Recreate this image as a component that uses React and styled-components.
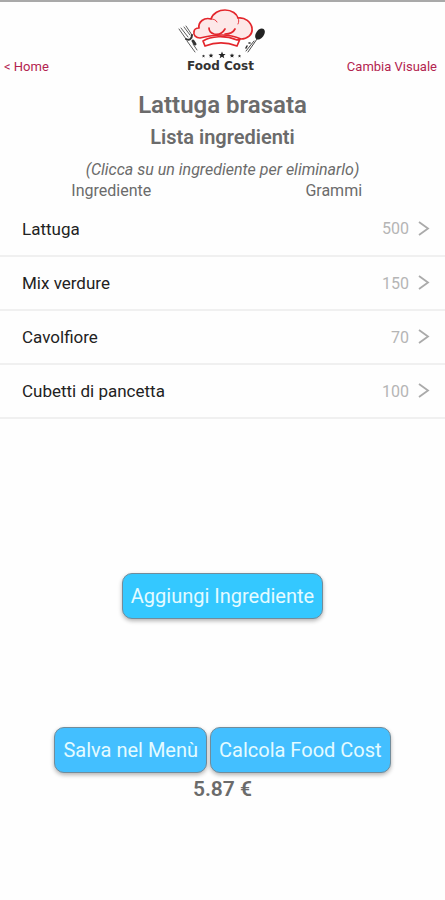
import React, { useState } from "react";
import styled, { createGlobalStyle } from "styled-components";

const Global = createGlobalStyle`
  * { box-sizing: border-box; }
  body {
    margin: 0;
    background: #fefefe;
    color: #6b6b6b;
    font-family: Roboto, "Liberation Sans", sans-serif;
  }
`;

const Page = styled.main`
  min-height: 100vh;
  border-top: 2px solid #a9a9a9;
`;

const Header = styled.header`
  display: grid;
  grid-template-columns: 1fr auto 1fr;
  align-items: end;
  height: 75px;
  padding: 0 8px 0 4px;
`;

const NavLink = styled.a`
  justify-self: ${(p) => (p.$right ? "end" : "start")};
  color: #b3234f;
  font-size: 13px;
  line-height: 20px;
  text-decoration: none;
`;

const Brand = styled.div`
  display: flex;
  flex-direction: column;
  align-items: center;
  height: 75px;
  padding-top: 6px;
`;

const BrandName = styled.span`
  color: #333;
  font-family: "DejaVu Sans", sans-serif;
  font-size: 12px;
  font-weight: bold;
  line-height: 12px;
`;

const Title = styled.h1`
  margin: 14px 0 0;
  font-size: 24px;
  font-weight: 600;
  line-height: 28px;
  text-align: center;
`;

const Subtitle = styled.h2`
  margin: 4px 0 0;
  font-size: 20px;
  font-weight: 600;
  line-height: 28px;
  text-align: center;
`;

const Hint = styled.p`
  margin: 9px 0 0;
  font-size: 16px;
  font-style: italic;
  line-height: 20px;
  text-align: center;
`;

const Table = styled.table`
  width: 100%;
  table-layout: fixed;
  border-collapse: collapse;
`;

const Head = styled.th`
  height: 22px;
  padding: 0;
  font-size: 16px;
  font-weight: 400;
  line-height: 22px;
`;

const Cell = styled.td`
  height: 54px;
  padding: 0 14px 0 22px;
  border-bottom: 2px solid #f0f0f0;
  color: #222;
  font-size: 17px;
`;

const Amount = styled.button`
  display: flex;
  align-items: center;
  gap: 8px;
  margin-left: auto;
  padding: 0;
  border: 0;
  background: none;
  color: #b5b5b5;
  font-family: inherit;
  font-size: 16px;
  cursor: pointer;
`;

const Actions = styled.div`
  display: flex;
  justify-content: center;
  gap: 3px;
  margin-top: ${(p) => p.$top}px;
`;

const Button = styled.button`
  height: 46px;
  padding: 0 8px;
  border: 1px solid #718c9b;
  border-radius: 10px;
  background: ${(p) => p.$color || "#43bfff"};
  box-shadow: 0 2px 4px rgba(0, 0, 0, 0.3);
  color: #e4fbff;
  font-family: inherit;
  font-size: 20px;
  line-height: 24px;
  cursor: pointer;
`;

const Total = styled.p`
  margin: 2px 0 0;
  font-size: 21px;
  font-weight: 600;
  line-height: 28px;
  text-align: center;
`;

const star = "M0-3.6 1-1.1 3.6-1 1.6.7 2.3 3.2 0 1.8-2.3 3.2-1.6.7-3.6-1-1-1.1Z";

function Logo() {
  return (
    <svg width="90" height="52" viewBox="176 8 90 52" aria-hidden="true">
      <g stroke="#e3262c" strokeWidth="1.7" strokeLinecap="round" strokeLinejoin="round">
        <path fill="#fde8e8" d="M200 38c-4 0-7-3-6-6 0-2 2-4 5-4-1-6 5-11 12-9 2-6 8-9 14-9 7 0 12 4 13 8 7-1 13 4 14 10 1 7-5 11-11 11-7-3-13-4-19-4-8 0-14 1-22 3Z" />
        <path fill="#fff" d="M203 41c8-5 22-6 34-1l3-1-3 7c-10-4-22-4-32 0Z" />
        <path fill="none" d="M214 34c-3-1-5-3-5-6M214 34c4 1 8 0 11-5M225 34c3 0 8-1 10-5" />
        <path fill="none" strokeWidth=".9" d="M211 19c3 0 5 1 6 3M238 18c1 2 1 4 0 6" />
      </g>
      <g stroke="#333" strokeLinecap="round" fill="none">
        <path strokeWidth=".8" d="M179 29l7 10M181 28l7 9M184 27l6 8M186 26l6 9M187 41l8 11M193 44l4 6" />
        <path strokeWidth="2" d="M186 39c3 2 6 0 6-4" />
        <path strokeWidth="3" d="M193 41l2 3" />
        <path strokeWidth=".9" d="M257 39l-9 13M254 41l-8 10" />
        <path strokeWidth="1.6" d="M249 43h1M247 46l-1 2" />
      </g>
      <ellipse cx="260" cy="34" rx="4" ry="6.2" fill="#222" transform="rotate(36 260 34)" />
      <g fill="#222">
        <path transform="translate(203.5 56) scale(.45)" d={star} />
        <path transform="translate(211 55.5) scale(.65)" d={star} />
        <path transform="translate(222 55)" d={star} />
        <path transform="translate(232 55.5) scale(.65)" d={star} />
        <path transform="translate(239.5 56) scale(.45)" d={star} />
      </g>
    </svg>
  );
}

function Chevron() {
  return (
    <svg width="14" height="18" viewBox="0 0 14 18" fill="none" stroke="#aaa" strokeWidth="1.8" aria-hidden="true">
      <path d="M2 2l9 6.500-9 6.500" />
    </svg>
  );
}

export default function App() {
  const [ingredienti, setIngredienti] = useState([
    { nome: "Lattuga", grammi: 500 },
    { nome: "Mix verdure", grammi: 150 },
    { nome: "Cavolfiore", grammi: 70 },
    { nome: "Cubetti di pancetta", grammi: 100 },
  ]);

  const elimina = (nome) => {
    setIngredienti(ingredienti.filter((item) => item.nome !== nome));
  };

  return (
    <Page>
      <Global />
      <Header>
        <NavLink href="#home">&lt; Home</NavLink>
        <Brand>
          <Logo />
          <BrandName>Food Cost</BrandName>
        </Brand>
        <NavLink href="#visuale" $right>Cambia Visuale</NavLink>
      </Header>
      <Title>Lattuga brasata</Title>
      <Subtitle>Lista ingredienti</Subtitle>
      <Hint>(Clicca su un ingrediente per eliminarlo)</Hint>
      <Table>
        <thead>
          <tr>
            <Head scope="col">Ingrediente</Head>
            <Head scope="col">Grammi</Head>
          </tr>
        </thead>
        <tbody>
          {ingredienti.map((item) => (
            <tr key={item.nome}>
              <Cell>{item.nome}</Cell>
              <Cell>
                <Amount aria-label={`Elimina ${item.nome}, ${item.grammi} grammi`} onClick={() => elimina(item.nome)}>
                  {item.grammi}
                  <Chevron />
                </Amount>
              </Cell>
            </tr>
          ))}
        </tbody>
      </Table>
      <Actions $top={154}>
        <Button $color="#34c8ff">Aggiungi Ingrediente</Button>
      </Actions>
      <Actions $top={108}>
        <Button>Salva nel Menù</Button>
        <Button>Calcola Food Cost</Button>
      </Actions>
      <Total>5.87 €</Total>
    </Page>
  );
}
